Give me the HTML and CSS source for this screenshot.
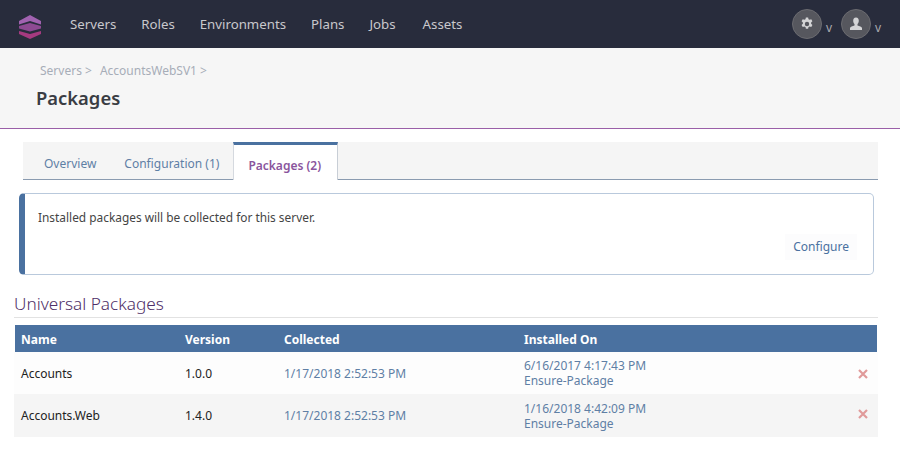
FILE: index.html
```html
<!DOCTYPE html>
<html lang="en">
<head>
<meta charset="utf-8">
<title>Packages</title>
<link rel="stylesheet" href="styles.css">
</head>
<body>
<header class="topbar">
  <svg class="logo" width="24" height="26" viewBox="0 0 24 26">
    <path fill="#a162b0" d="M12 1 L23 7 V10.500 L12 7 L1 10.500 V7 Z"/>
    <path fill="#8d4a92" d="M12 9 L23 12 V14.500 L12 17.500 L1 14.500 V12 Z"/>
    <path fill="#a53a80" d="M1 17 L12 20 L23 17 V20 L12 25 L1 20 Z"/>
  </svg>
  <nav class="mainnav">
    <a>Servers</a><a>Roles</a><a>Environments</a><a>Plans</a><a>Jobs</a><a class="last">Assets</a>
  </nav>
  <div class="usertools">
    <span class="circle">
      <svg width="14" height="14" viewBox="0 0 16 16"><path fill="#d4d4d6" fill-rule="evenodd" d="M6.700 .5h2.600l.4 2 1.300.7 1.900-.7 1.300 2.300-1.500 1.400v1.600l1.500 1.400-1.300 2.300-1.900-.7-1.300.7-.4 2H6.700l-.4-2-1.300-.7-1.900.7-1.300-2.300 1.500-1.400V6.200L1.800 4.800 3.100 2.500l1.900.7 1.300-.7zM8 5.500a2.500 2.500 0 1 0 0 5 2.500 2.500 0 0 0 0-5z"/></svg>
    </span>
    <span class="caret">v</span>
    <span class="circle">
      <svg width="16" height="16" viewBox="0 0 16 16"><path fill="#d4d4d6" d="M8 1.500c2 0 2.800 1.500 2.800 3.200 0 1.500-.6 2.700-1.300 3.400v1.300c1.800.6 4.500 1.200 4.500 2.600V14H2v-2c0-1.400 2.700-2 4.500-2.600V8.100C5.800 7.400 5.200 6.200 5.200 4.700c0-1.700.8-3.200 2.800-3.200z"/></svg>
    </span>
    <span class="caret">v</span>
  </div>
</header>
<section class="pagehead">
  <div class="crumbs"><a>Servers &gt;</a><a>AccountsWebSV1 &gt;</a></div>
  <h1>Packages</h1>
</section>
<main class="content">
  <div class="tabs">
    <a class="tab">Overview</a>
    <a class="tab">Configuration (1)</a>
    <a class="tab active">Packages (2)</a>
  </div>
  <div class="notice">
    <p>Installed packages will be collected for this server.</p>
    <div class="notice-actions"><a class="btn">Configure</a></div>
  </div>
  <h2>Universal Packages</h2>
  <table class="grid">
    <thead>
      <tr><th class="c-name">Name</th><th class="c-ver">Version</th><th class="c-col">Collected</th><th class="c-ins">Installed On</th><th class="c-del"></th></tr>
    </thead>
    <tbody>
      <tr>
        <td>Accounts</td><td>1.0.0</td><td><a>1/17/2018 2:52:53 PM</a></td>
        <td><a class="line">6/16/2017 4:17:43 PM</a><a class="line">Ensure-Package</a></td>
        <td class="del"><svg width="10" height="10" viewBox="0 0 10 10"><path stroke="#e09a9a" stroke-width="2.200" d="M1 1L9 9M9 1L1 9"/></svg></td>
      </tr>
      <tr class="tall">
        <td>Accounts.Web</td><td>1.4.0</td><td><a>1/17/2018 2:52:53 PM</a></td>
        <td><a class="line">1/16/2018 4:42:09 PM</a><a class="line">Ensure-Package</a></td>
        <td class="del"><svg width="10" height="10" viewBox="0 0 10 10"><path stroke="#e09a9a" stroke-width="2.200" d="M1 1L9 9M9 1L1 9"/></svg></td>
      </tr>
    </tbody>
  </table>
</main>
</body>
</html>
```
FILE: styles.css
```css
* { box-sizing: border-box; }
html, body { margin: 0; padding: 0; }
body { background: #fff; font-family: "Noto Sans", "Open Sans", sans-serif; font-size: 12px; color: #333; overflow: hidden; }
.topbar { height: 48px; background: #282c3c; display: flex; align-items: center; padding-left: 18px; }
.logo { display: block; margin-top: 6px; }
.mainnav { display: flex; gap: 25px; margin-left: 28px; font-size: 13.250px; color: #c8c8cc; }
.mainnav .last { margin-left: 2px; }
.usertools { margin-left: auto; display: flex; align-items: center; padding-right: 17px; color: #a9a9ae; }
.circle { width: 30px; height: 30px; border-radius: 50%; background: #56575e; border: 1px solid #6b6b70; display: flex; align-items: center; justify-content: center; }
.caret { width: 8px; font-size: 12px; margin: 6px 7px 0 4px; }
.caret:last-child { margin-right: 0; }
.pagehead { height: 81px; background: #f6f6f6; border-bottom: 1px solid #9a5fa8; padding: 14px 0 0 36px; }
.crumbs { display: flex; gap: 8px; padding-left: 4px; color: #a7adb8; font-size: 12px; line-height: 18px; }
h1 { margin: 6px 0 0; font-size: 18.400px; line-height: 24px; font-weight: 600; color: #3a3d44; }
.content { position: relative; padding: 13px 22px 0 14px; }
.tabs { display: flex; margin: 0 0 0 9px; height: 38px; background: #f5f5f5; border-bottom: 1px solid #8a9bb0; }
.tab { padding: 14px 14px 0; color: #5f7fa5; font-size: 12px; line-height: 16px; }
.tab:first-child { padding-left: 21px; }
.tab.active { height: 38px; background: #fff; border-top: 3px solid #4a71a0; border-left: 1px solid #d5d9df; border-right: 1px solid #c8ced6; color: #8a559d; font-size: 12px; font-weight: 600; padding: 13px 16px 0 14px; }
.notice { margin: 13px 4px 0 5px; height: 82px; border: 1px solid #b9c9dc; border-left: 6px solid #4a71a0; border-radius: 5px; padding: 14px 8px 0 13px; display: flex; flex-direction: column; color: #444; }
.notice p { margin: 0; line-height: 18px; font-size: 11.880px; }
.notice-actions { display: flex; justify-content: flex-end; margin-top: 8px; padding-right: 8px; }
.btn { background: #fcfcfd; padding: 5px 8px; color: #4a71a0; line-height: 16px; }
h2 { margin: 17px 0 0; border-bottom: 1px solid #e2e2e2; font-weight: 300; font-size: 17.200px; line-height: 24px; height: 26px; color: #4f2f68; }
.grid { width: 864px; margin: 7px 0 0; border-collapse: separate; border-spacing: 0; table-layout: fixed; }
.grid th { background: #4a71a0; background-clip: padding-box; color: #fff; text-align: left; height: 27px; padding: 1px 6px 0; font-size: 12px; font-weight: 700; }
.grid th.c-name { border-left: 1px solid #fff; }
.grid th.c-del { border-right: 1px solid #fff; }
.c-name { width: 165px; } .c-ver { width: 99px; } .c-col { width: 240px; } .c-ins { width: 320px; } .c-del { width: 40px; }
.grid td { height: 42px; padding: 0 6px; line-height: 15px; color: #222; vertical-align: middle; }
.grid td:first-child { padding-left: 7px; }
.grid tr.tall td { height: 43px; }
.grid td a { color: #5f7fa5; }
.grid td a.line { display: block; height: 15px; }
.grid tbody tr:nth-child(odd) { background: #fdfdfd; }
.grid tbody tr:nth-child(even) { background: #f5f5f5; }
.grid td.del { padding: 0 10px 0 0; text-align: right; }
.grid tr.tall td.del { padding-bottom: 5px; }
.del svg { display: inline-block; vertical-align: middle; }
```
